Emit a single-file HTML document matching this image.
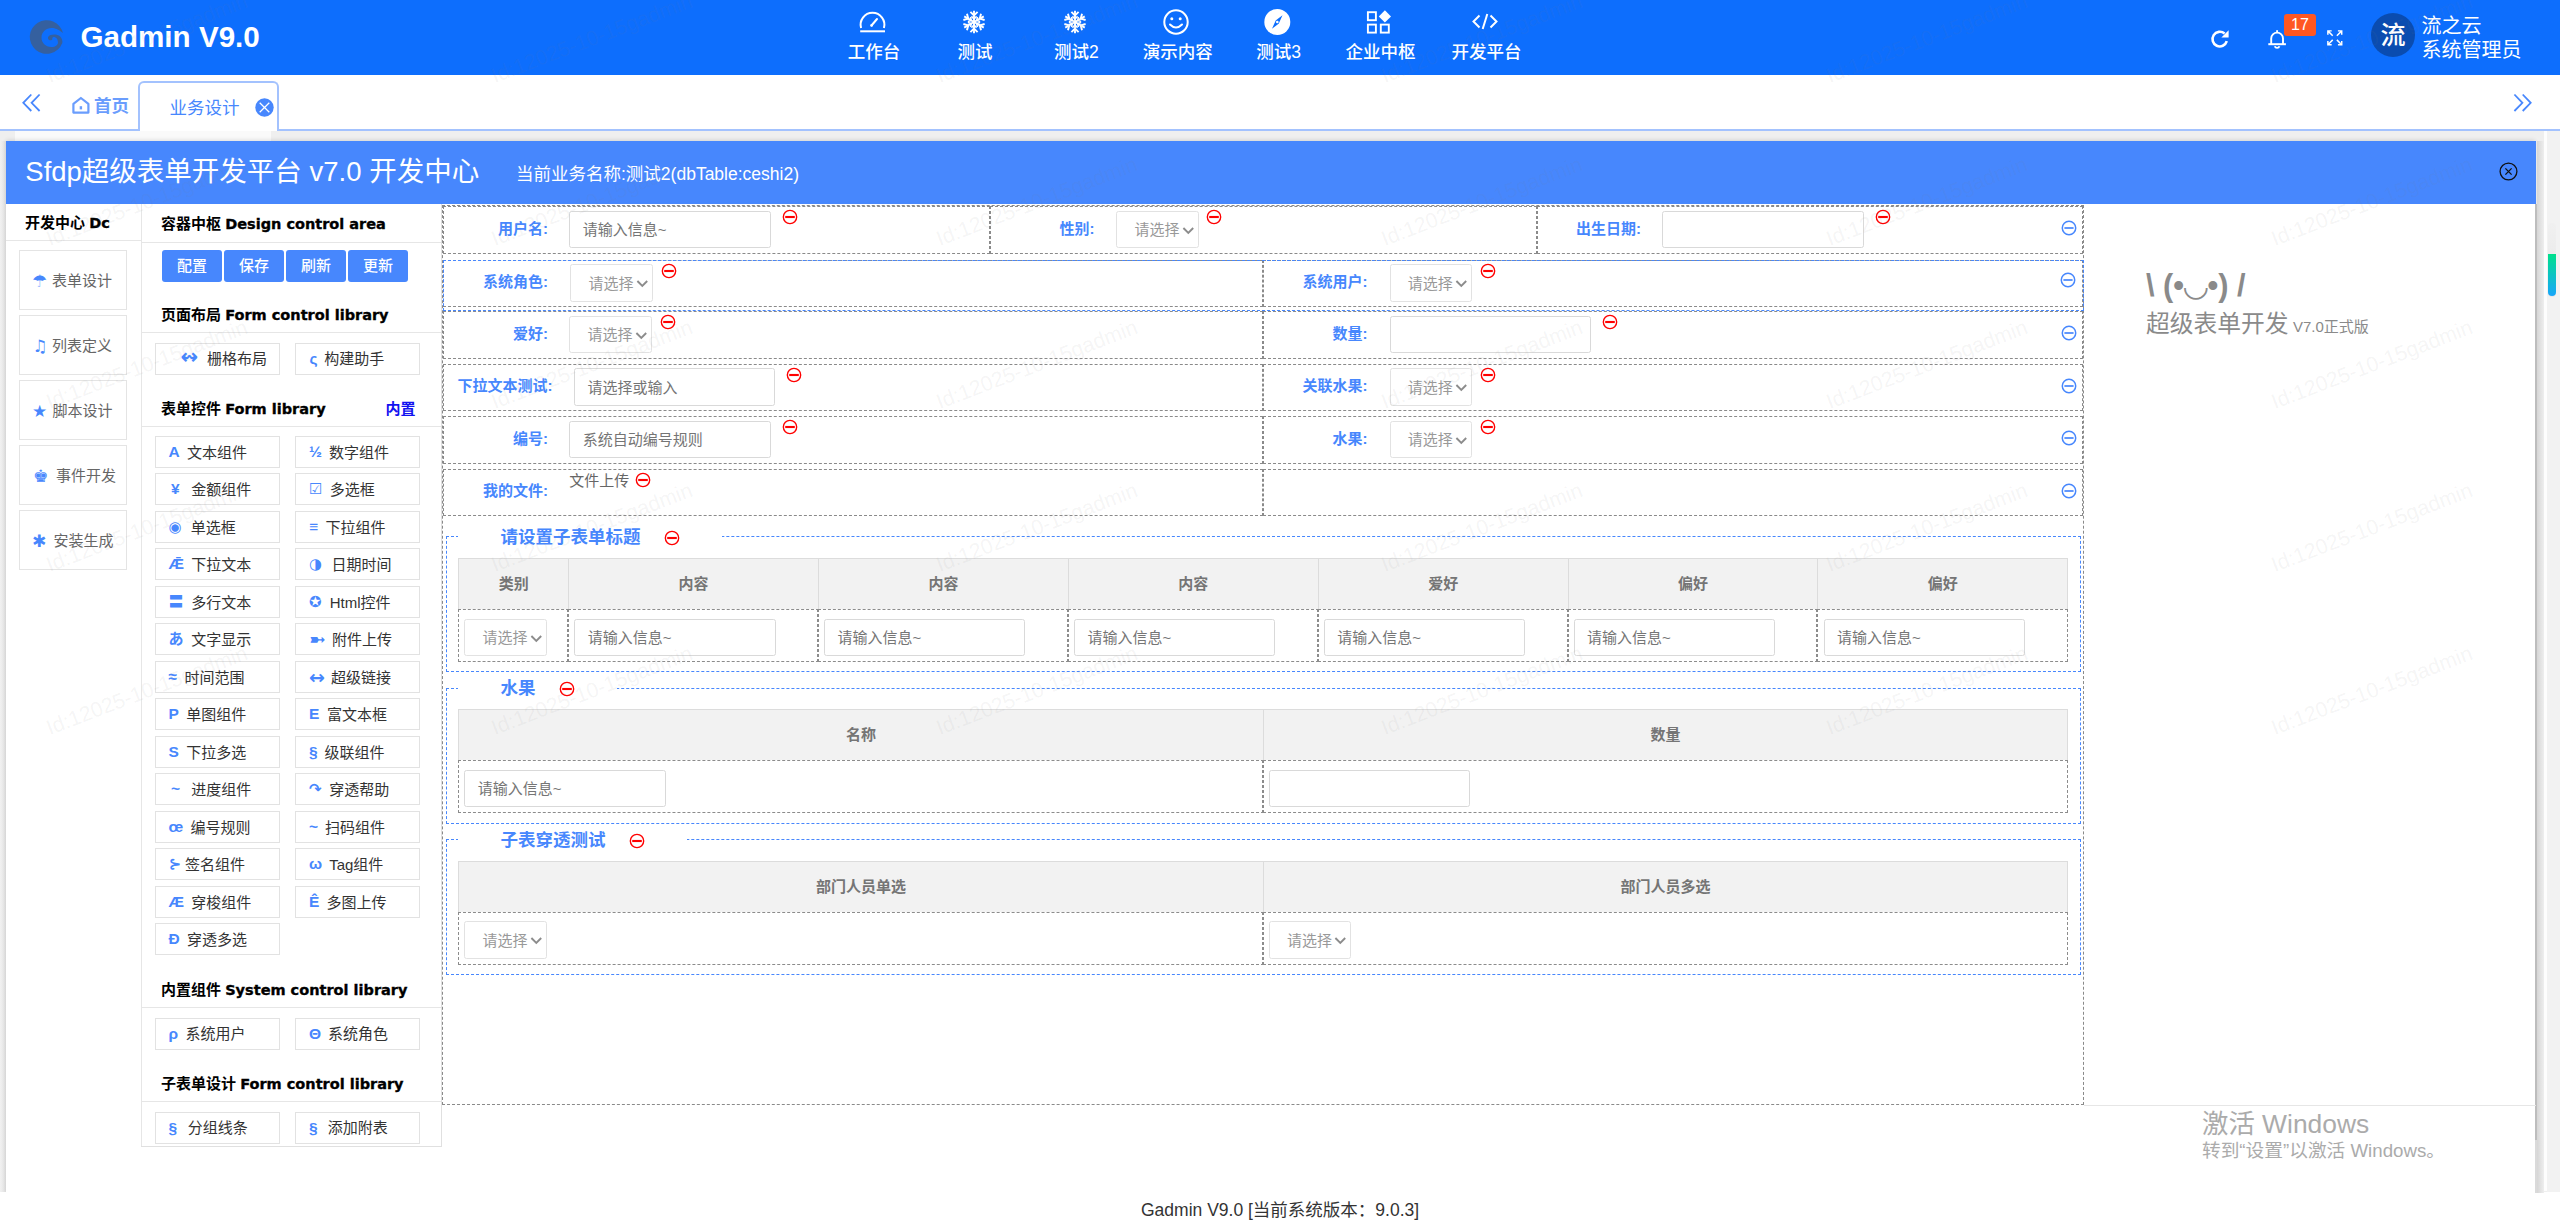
<!DOCTYPE html><html lang="zh"><head><meta charset="utf-8"><title>Gadmin V9.0</title><style>
*{box-sizing:border-box;margin:0;padding:0}
html,body{width:2560px;height:1229px;overflow:hidden;background:#fff}
body{font-family:"Liberation Sans","Noto Sans CJK SC",sans-serif;font-size:15px;color:#333;position:relative}
.a{position:absolute}
.t{position:absolute;white-space:nowrap;line-height:1}
.hdr{left:0;top:0;width:2560px;height:75px;background:#0d6efd}
.nav{color:#fff;font-size:17.5px;font-weight:500;transform:translateX(-50%)}
.box{position:absolute;border:1px solid #e4e4e4;background:#fff}
.it{position:absolute;border:1px solid #e2e2e2;height:32px;width:124.5px;background:#fff;white-space:nowrap;line-height:30px;font-size:15px;color:#333}
.it i{font-style:normal;color:#4787fd;font-weight:bold;position:absolute;top:0;font-family:"DejaVu Sans","Noto Sans CJK SC",sans-serif;font-size:14px}
.it span{position:absolute;top:0.8px}
.h5{position:absolute;left:161px;font-weight:bold;font-size:15px;color:#000;white-space:nowrap;line-height:1}
.h5 b{font-family:"DejaVu Sans",sans-serif;font-size:14.5px;font-weight:bold;-webkit-text-stroke:0.35px #000}
.hl{position:absolute;left:141px;width:300px;height:1px;background:#e6e6e6}
.btn{position:absolute;top:250px;height:32px;width:60px;border-radius:3px;background:#4787fd;color:#fff;font-size:15px;font-weight:500;line-height:32px;text-align:center}
.row{position:absolute;left:443px;width:1640px;height:48px}
.cell{position:absolute;top:0;height:48px;border:1px dashed #8a8a8a}
.lbl{position:absolute;font-weight:bold;color:#4787fd;font-size:15px;white-space:nowrap;line-height:1;text-align:right}
.inp{position:absolute;width:201px;height:36.5px;border:1px solid #d9d9d9;border-radius:2.5px;background:#fff;font-size:15px;color:#757575;line-height:36px;padding-left:12.4px;white-space:nowrap}
.sel{position:absolute;width:82.5px;height:36.5px;border:1px solid #e2e2e2;border-radius:2.5px;background:#fff;font-size:15px;color:#999;line-height:36px;padding-left:17.2px;white-space:nowrap}
.sel svg{position:absolute;left:64.5px;top:12.8px}
.ico{position:absolute;width:16px;height:16px}
.fs{position:absolute;left:446.3px;width:1634.7px;height:136px;border:1px dashed #4787fd}
.lg{position:absolute;background:#fff;height:30px;top:-15px}
.th{position:absolute;background:#f2f2f2;border:1px solid #dcdcdc;height:51px;font-weight:bold;color:#757575;font-size:15px;text-align:center;line-height:49px}
.td{position:absolute;border:1px dashed #8c8c8c;height:53px;background:#fff}
.wm{position:absolute;white-space:nowrap;font-size:21.2px;color:rgba(125,125,125,0.08);transform:rotate(-21deg);transform-origin:left bottom;line-height:1;font-family:"Liberation Sans",sans-serif;pointer-events:none}
</style></head><body>
<div class="a hdr"></div>
<svg class="a" style="left:28px;top:19px" width="38" height="38" viewBox="0 0 38 38">
<path fill="#35609f" d="M35 14.3 A16.8 16.8 0 1 0 34.3 24 L29.8 22.3 C30.8 25.5 27.5 28.3 23.3 28.1 C17.5 27.8 13.5 23.8 13.5 18.5 C13.5 13 18 8.9 23.5 8.9 C28.5 8.9 32.5 11.5 35 14.3 Z M34.3 24 C34.8 20.5 33 16.8 28.7 15.8 C25.5 15.1 21.5 15.6 20.3 17.8 C19.5 19.3 20.3 21 21.8 21.3 C23.3 21.6 24.6 20.8 24.3 19.8 C24 18.6 25.5 17.7 27 18.2 C28.8 18.8 29.7 20.5 29.8 22.3 Z"/>
</svg>
<div class="t" style="left:80.5px;top:22.3px;font-size:29.6px;font-weight:bold;color:#fff">Gadmin V9.0</div>
<div class="t nav" style="left:874px;top:44.3px">工作台</div>
<div class="t nav" style="left:975px;top:44.3px">测试</div>
<div class="t nav" style="left:1076.3px;top:44.3px">测试2</div>
<div class="t nav" style="left:1177.7px;top:44.3px">演示内容</div>
<div class="t nav" style="left:1278.7px;top:44.3px">测试3</div>
<div class="t nav" style="left:1380.6px;top:44.3px">企业中枢</div>
<div class="t nav" style="left:1486.6px;top:44.3px">开发平台</div>
<svg class="a" style="left:858px;top:10px" width="29" height="24" viewBox="0 0 29 24" fill="none" stroke="#fff" stroke-width="2">
<path d="M3.07 18 A11.9 11.9 0 1 1 25.93 18"/><path d="M2.2 21.3h24.8"/><path d="M13.5 15.5 L19 9" stroke-linecap="round"/><circle cx="13.6" cy="15.4" r="1.3" fill="#fff" stroke="none"/></svg>
<svg class="a" style="left:962px;top:9.5px" width="24" height="24" viewBox="-12 -12 24 24" fill="none" stroke="#fff" stroke-width="1.9" stroke-linecap="butt"><g transform="rotate(0)"><path d="M0 0V-11.3"/><path d="M-3.6 -10.2L0 -6.6L3.6 -10.2"/><path d="M-2.6 -5.6L0 -3L2.6 -5.6" stroke-width="1.5"/></g><g transform="rotate(60)"><path d="M0 0V-11.3"/><path d="M-3.6 -10.2L0 -6.6L3.6 -10.2"/><path d="M-2.6 -5.6L0 -3L2.6 -5.6" stroke-width="1.5"/></g><g transform="rotate(120)"><path d="M0 0V-11.3"/><path d="M-3.6 -10.2L0 -6.6L3.6 -10.2"/><path d="M-2.6 -5.6L0 -3L2.6 -5.6" stroke-width="1.5"/></g><g transform="rotate(180)"><path d="M0 0V-11.3"/><path d="M-3.6 -10.2L0 -6.6L3.6 -10.2"/><path d="M-2.6 -5.6L0 -3L2.6 -5.6" stroke-width="1.5"/></g><g transform="rotate(240)"><path d="M0 0V-11.3"/><path d="M-3.6 -10.2L0 -6.6L3.6 -10.2"/><path d="M-2.6 -5.6L0 -3L2.6 -5.6" stroke-width="1.5"/></g><g transform="rotate(300)"><path d="M0 0V-11.3"/><path d="M-3.6 -10.2L0 -6.6L3.6 -10.2"/><path d="M-2.6 -5.6L0 -3L2.6 -5.6" stroke-width="1.5"/></g></svg>
<svg class="a" style="left:1063px;top:9.5px" width="24" height="24" viewBox="-12 -12 24 24" fill="none" stroke="#fff" stroke-width="1.9" stroke-linecap="butt"><g transform="rotate(0)"><path d="M0 0V-11.3"/><path d="M-3.6 -10.2L0 -6.6L3.6 -10.2"/><path d="M-2.6 -5.6L0 -3L2.6 -5.6" stroke-width="1.5"/></g><g transform="rotate(60)"><path d="M0 0V-11.3"/><path d="M-3.6 -10.2L0 -6.6L3.6 -10.2"/><path d="M-2.6 -5.6L0 -3L2.6 -5.6" stroke-width="1.5"/></g><g transform="rotate(120)"><path d="M0 0V-11.3"/><path d="M-3.6 -10.2L0 -6.6L3.6 -10.2"/><path d="M-2.6 -5.6L0 -3L2.6 -5.6" stroke-width="1.5"/></g><g transform="rotate(180)"><path d="M0 0V-11.3"/><path d="M-3.6 -10.2L0 -6.6L3.6 -10.2"/><path d="M-2.6 -5.6L0 -3L2.6 -5.6" stroke-width="1.5"/></g><g transform="rotate(240)"><path d="M0 0V-11.3"/><path d="M-3.6 -10.2L0 -6.6L3.6 -10.2"/><path d="M-2.6 -5.6L0 -3L2.6 -5.6" stroke-width="1.5"/></g><g transform="rotate(300)"><path d="M0 0V-11.3"/><path d="M-3.6 -10.2L0 -6.6L3.6 -10.2"/><path d="M-2.6 -5.6L0 -3L2.6 -5.6" stroke-width="1.5"/></g></svg>
<svg class="a" style="left:1162px;top:7.5px" width="28" height="28" viewBox="0 0 28 28" fill="none" stroke="#fff" stroke-width="2">
<circle cx="14" cy="14" r="11.7"/><circle cx="9.8" cy="10.8" r="1.5" fill="#fff" stroke="none"/><circle cx="18.2" cy="10.8" r="1.5" fill="#fff" stroke="none"/><path d="M8 16.5 Q14 22.5 20 16.5" stroke-linecap="round"/></svg>
<svg class="a" style="left:1263px;top:7.5px" width="28" height="28" viewBox="0 0 28 28">
<circle cx="14.3" cy="14" r="13" fill="#fff"/><path d="M19.5 7.2 L15.8 15.6 L12.6 12.4 Z M9 20.8 L12.7 12.4 L15.9 15.6 Z" fill="#0d6efd"/><circle cx="14.3" cy="14" r="1.3" fill="#fff"/></svg>
<svg class="a" style="left:1366px;top:9.5px" width="26" height="25" viewBox="0 0 26 25" fill="none" stroke="#fff" stroke-width="1.9">
<rect x="1.9" y="2.2" width="8" height="8"/><rect x="1.9" y="14.6" width="8" height="8"/><rect x="14.8" y="14.6" width="8" height="8"/><path d="M18.9 0.3 L25 6.4 L18.9 12.5 L12.8 6.4 Z" fill="#fff" stroke="none"/></svg>
<svg class="a" style="left:1471px;top:12px" width="28" height="19" viewBox="0 0 28 19" fill="none" stroke="#fff" stroke-width="2" stroke-linecap="butt">
<path d="M8.5 3.5 L2.5 9.5 L8.5 15.5"/><path d="M19.5 3.5 L25.5 9.5 L19.5 15.5"/><path d="M16.3 2 L11.7 17"/></svg>
<svg class="a" style="left:2209px;top:27.5px" width="22" height="22" viewBox="0 0 22 22" fill="none" stroke="#fff" stroke-width="2.6">
<path d="M17.8 13.2 A7.3 7.3 0 1 1 15.6 5.6"/><path d="M19.6 2.2 V9.4 H12.4 Z" fill="#fff" stroke="none"/></svg>
<svg class="a" style="left:2266px;top:28px" width="22" height="22" viewBox="0 0 22 22" fill="none" stroke="#fff" stroke-width="1.9">
<path d="M5.2 16 V10.5 A5.9 5.9 0 0 1 17 10.5 V16"/><path d="M2.3 16.2 H19.9" stroke-width="2"/><path d="M8.8 18.2 A2.4 2.4 0 0 0 13.4 18.2" /><path d="M11.1 2.2V4.4"/></svg>
<div class="a" style="left:2284px;top:14px;width:32px;height:22px;background:#ff5722;border-radius:3px;color:#fff;font-size:16px;line-height:22px;text-align:center">17</div>
<svg class="a" style="left:2327.2px;top:30px" width="15.6" height="15.6" viewBox="0 0 18 18" fill="none" stroke="#fff" stroke-width="1.7">
<path d="M1 5.4V1H5.4M1.3 1.3L6.6 6.6"/><path d="M12.6 1H17V5.4M16.7 1.3L11.4 6.6"/><path d="M1 12.6V17H5.4M1.3 16.7L6.6 11.4"/><path d="M12.6 17H17V12.6M16.7 16.7L11.4 11.4"/></svg>
<div class="a" style="left:2371px;top:12.5px;width:44px;height:44px;border-radius:50%;background:#0a4cb0"></div>
<div class="t" style="left:2380.5px;top:22.5px;font-size:25px;font-weight:500;color:#fff">流</div>
<div class="t" style="left:2421.5px;top:15.6px;font-size:20px;color:#fff">流之云</div>
<div class="t" style="left:2421.5px;top:40px;font-size:20px;color:#fff">系统管理员</div>
<div class="a" style="left:0;top:75px;width:2560px;height:55px;background:#fff"></div>
<div class="a" style="left:0;top:130px;width:2560px;height:1063px;background:#efefef"></div><div class="a" style="left:0;top:141px;width:6px;height:1052px;background:linear-gradient(to right,#f1f1f1,#e2e2e2)"></div>
<div class="a" style="left:15px;top:131px;width:256px;height:10px;background:#fafafa"></div>
<div class="a" style="left:0;top:129px;width:2560px;height:2px;background:#a3c2fe"></div>
<svg class="a" style="left:21px;top:92.5px" width="21" height="20" viewBox="0 0 21 20" fill="none" stroke="#4787fd" stroke-width="1.8"><path d="M10.3 1.5L2.3 9.8L10.3 18"/><path d="M18.6 1.5L10.6 9.8L18.6 18"/></svg>
<svg class="a" style="left:2512px;top:92.5px" width="21" height="20" viewBox="0 0 21 20" fill="none" stroke="#4787fd" stroke-width="1.8"><path d="M2.4 1.5L10.4 9.8L2.4 18"/><path d="M10.7 1.5L18.7 9.8L10.7 18"/></svg>
<svg class="a" style="left:71px;top:96px" width="20" height="19" viewBox="0 0 20 19" fill="none" stroke="#6a9dfd" stroke-width="2.2" stroke-linejoin="round"><path d="M2.4 7.8 L9.9 2 L17.4 7.8 V16.6 H2.4 Z"/><path d="M9.9 10.2V13.4" stroke-width="2.4"/></svg>
<div class="t" style="left:94px;top:98.2px;font-size:17.5px;font-weight:bold;color:#6a9dfd">首页</div>
<div class="a" style="left:138px;top:81px;width:141px;height:50px;border:2px solid #a3c2fe;border-bottom:none;border-radius:6px 6px 0 0;background:#fff"></div>
<div class="t" style="left:169.5px;top:99.7px;font-size:17.5px;color:#4787fd">业务设计</div>
<svg class="a" style="left:254.5px;top:98px" width="19" height="19" viewBox="0 0 19 19"><circle cx="9.5" cy="9.5" r="9.2" fill="#4787fd"/><path d="M4.7 4.7L14.3 14.3M14.3 4.7L4.7 14.3" stroke="#fff" stroke-width="1.25"/></svg>
<div class="a" style="left:6px;top:141px;width:2529px;height:1053px;background:#fff;box-shadow:0 -1px 4px rgba(0,0,0,.12)"></div>
<div class="a" style="left:6px;top:141px;width:2530px;height:63px;background:#4787fd"></div>
<div class="t" style="left:25.3px;top:158px;font-size:27.5px;color:#fff">Sfdp超级表单开发平台 v7.0 开发中心</div>
<div class="t" style="left:516px;top:166px;font-size:17.5px;color:#fff">当前业务名称:测试2(dbTable:ceshi2)</div>
<svg class="a" style="left:2498px;top:161px" width="21" height="21" viewBox="0 0 21 21" fill="none" stroke="#111" stroke-width="1.3"><circle cx="10.5" cy="10.5" r="8.4"/><path d="M7.4 7.4L13.6 13.6M13.6 7.4L7.4 13.6"/></svg>
<div class="a" style="left:0;top:1192px;width:2560px;height:37px;background:#fff"></div>
<div class="t" style="left:1141px;top:1202px;font-size:17.5px;color:#333">Gadmin V9.0 [当前系统版本：9.0.3]</div>
<div class="a" style="left:2535px;top:204px;width:2px;height:936px;background:#bdbdbd"></div>
<div class="a" style="left:2535px;top:1140px;width:2px;height:53px;background:#dadada"></div>
<div class="a" style="left:2537px;top:141px;width:7.2px;height:1052px;background:linear-gradient(to right,#d6d6d6,#eeeeee)"></div>
<div class="a" style="left:2544.2px;top:131px;width:2.8px;height:1060px;background:#fdfdfd"></div>
<div class="a" style="left:2547px;top:131px;width:13px;height:1060.5px;background:#f2f2f2"></div>
<div class="a" style="left:2547.8px;top:223px;width:8.6px;height:74px;border-radius:5px;background:linear-gradient(#f0f0f0,#e6e6e6)"></div>
<div class="a" style="left:2547.8px;top:253.8px;width:8.6px;height:42.7px;border-radius:0 0 5px 5px;background:linear-gradient(#00e08c,#18a6fa)"></div>
<div class="a" style="left:140.5px;top:204px;width:1px;height:942px;background:#e6e6e6"></div>
<div class="t" style="left:25px;top:215px;font-size:15px;font-weight:bold;color:#000">开发中心 <b style="font-family:'DejaVu Sans',sans-serif;font-size:14.5px;-webkit-text-stroke:0.35px #000">Dc</b></div>
<div class="a" style="left:6px;top:240px;width:135px;height:1px;background:#e6e6e6"></div>
<div class="box" style="left:19px;top:250px;width:108px;height:59.5px"></div>
<div class="t" style="left:32px;top:272.6px;font-size:17px;color:#4787fd;font-family:'DejaVu Sans','Noto Sans CJK SC',sans-serif">☂</div>
<div class="t" style="left:52px;top:273.3px;font-size:15px;color:#666">表单设计</div>
<div class="box" style="left:19px;top:315px;width:108px;height:59.5px"></div>
<div class="t" style="left:32.5px;top:337.6px;font-size:17px;color:#4787fd;font-family:'DejaVu Sans','Noto Sans CJK SC',sans-serif">♫</div>
<div class="t" style="left:52px;top:338.3px;font-size:15px;color:#666">列表定义</div>
<div class="box" style="left:19px;top:380px;width:108px;height:59.5px"></div>
<div class="t" style="left:32px;top:402.6px;font-size:17px;color:#4787fd;font-family:'DejaVu Sans','Noto Sans CJK SC',sans-serif">★</div>
<div class="t" style="left:52.5px;top:403.3px;font-size:15px;color:#666">脚本设计</div>
<div class="box" style="left:19px;top:445px;width:108px;height:59.5px"></div>
<div class="t" style="left:33px;top:467.6px;font-size:17px;color:#4787fd;font-family:'DejaVu Sans','Noto Sans CJK SC',sans-serif">♚</div>
<div class="t" style="left:56px;top:468.3px;font-size:15px;color:#666">事件开发</div>
<div class="box" style="left:19px;top:510px;width:108px;height:59.5px"></div>
<div class="t" style="left:32px;top:532.6px;font-size:17px;color:#4787fd;font-family:'DejaVu Sans','Noto Sans CJK SC',sans-serif">✱</div>
<div class="t" style="left:53.5px;top:533.3px;font-size:15px;color:#666">安装生成</div>
<div class="a" style="left:441px;top:204px;width:1px;height:942px;background:#e0e0e0"></div>
<div class="a" style="left:141px;top:1145.5px;width:301px;height:1px;background:#e0e0e0"></div>
<div class="h5" style="top:216px">容器中枢 <b>Design control area</b></div>
<div class="hl" style="top:242px"></div>
<div class="btn" style="left:162px">配置</div>
<div class="btn" style="left:224px">保存</div>
<div class="btn" style="left:286px">刷新</div>
<div class="btn" style="left:348px">更新</div>
<div class="h5" style="top:307px">页面布局 <b>Form control library</b></div>
<div class="hl" style="top:332px"></div>
<div class="h5" style="top:401px">表单控件 <b>Form library</b></div>
<div class="t" style="left:385.5px;top:401px;font-size:15px;font-weight:bold;color:#1212f0">内置</div>
<div class="hl" style="top:426px"></div>
<div class="h5" style="top:982px">内置组件 <b>System control library</b></div>
<div class="hl" style="top:1007px"></div>
<div class="h5" style="top:1076px">子表单设计 <b>Form control library</b></div>
<div class="hl" style="top:1101px"></div>
<div class="it" style="left:155px;top:342.5px"><i style="left:24.6px;top:-1.5px;font-size:21px;font-family:'DejaVu Sans','Noto Sans CJK SC',sans-serif">↭</i><span style="left:51.1px">栅格布局</span></div>
<div class="it" style="left:295px;top:342.5px"><i style="left:13.6px;top:0px;font-size:15.5px;font-family:'Liberation Sans','DejaVu Sans',sans-serif">ς</i><span style="left:28.2px">构建助手</span></div>
<div class="it" style="left:155px;top:436.0px"><i style="left:12.6px;top:0px;font-size:15.5px;font-family:'Liberation Sans','DejaVu Sans',sans-serif">A</i><span style="left:30.900000000000002px">文本组件</span></div>
<div class="it" style="left:295px;top:436.0px"><i style="left:13.1px;top:0px;font-size:15.5px;font-family:'Liberation Sans','DejaVu Sans',sans-serif">½</i><span style="left:32.900000000000006px">数字组件</span></div>
<div class="it" style="left:155px;top:473.48px"><i style="left:15.1px;top:0px;font-size:15.5px;font-family:'Liberation Sans','DejaVu Sans',sans-serif">¥</i><span style="left:35.300000000000004px">金额组件</span></div>
<div class="it" style="left:295px;top:473.48px"><i style="left:13.1px;top:0px;font-size:15px;font-family:'DejaVu Sans','Noto Sans CJK SC',sans-serif">☑</i><span style="left:33.7px">多选框</span></div>
<div class="it" style="left:155px;top:510.96px"><i style="left:12.6px;top:0px;font-size:15px;font-family:'DejaVu Sans','Noto Sans CJK SC',sans-serif">◉</i><span style="left:34.800000000000004px">单选框</span></div>
<div class="it" style="left:295px;top:510.96px"><i style="left:13.1px;top:0px;font-size:15.5px;font-family:'Liberation Sans','DejaVu Sans',sans-serif">≡</i><span style="left:29.599999999999998px">下拉组件</span></div>
<div class="it" style="left:155px;top:548.44px"><i style="left:12.6px;top:0px;font-size:15.5px;font-family:'Liberation Sans','DejaVu Sans',sans-serif">Ǣ</i><span style="left:35.300000000000004px">下拉文本</span></div>
<div class="it" style="left:295px;top:548.44px"><i style="left:13.1px;top:0px;font-size:15px;font-family:'DejaVu Sans','Noto Sans CJK SC',sans-serif">◑</i><span style="left:35.5px">日期时间</span></div>
<div class="it" style="left:155px;top:585.92px"><i style="left:12.6px;top:0px;font-size:15px;font-family:'DejaVu Sans','Noto Sans CJK SC',sans-serif">〓</i><span style="left:35.300000000000004px">多行文本</span></div>
<div class="it" style="left:295px;top:585.92px"><i style="left:13.1px;top:0px;font-size:15px;font-family:'DejaVu Sans','Noto Sans CJK SC',sans-serif">✪</i><span style="left:33.7px">Html控件</span></div>
<div class="it" style="left:155px;top:623.4px"><i style="left:12.6px;top:0px;font-size:15px;font-family:'DejaVu Sans','Noto Sans CJK SC',sans-serif">あ</i><span style="left:35.300000000000004px">文字显示</span></div>
<div class="it" style="left:295px;top:623.4px"><i style="left:13.1px;top:0px;font-size:20px;font-family:'DejaVu Sans','Noto Sans CJK SC',sans-serif">➼</i><span style="left:35.900000000000006px">附件上传</span></div>
<div class="it" style="left:155px;top:660.88px"><i style="left:12.6px;top:0px;font-size:15.5px;font-family:'Liberation Sans','DejaVu Sans',sans-serif">≈</i><span style="left:28.599999999999998px">时间范围</span></div>
<div class="it" style="left:295px;top:660.88px"><i style="left:13.1px;top:0px;font-size:19px;font-family:'DejaVu Sans','Noto Sans CJK SC',sans-serif">↔</i><span style="left:35.0px">超级链接</span></div>
<div class="it" style="left:155px;top:698.3599999999999px"><i style="left:12.6px;top:0px;font-size:15.5px;font-family:'Liberation Sans','DejaVu Sans',sans-serif">P</i><span style="left:30.3px">单图组件</span></div>
<div class="it" style="left:295px;top:698.3599999999999px"><i style="left:13.1px;top:0px;font-size:15.5px;font-family:'Liberation Sans','DejaVu Sans',sans-serif">E</i><span style="left:30.900000000000002px">富文本框</span></div>
<div class="it" style="left:155px;top:735.8399999999999px"><i style="left:12.6px;top:0px;font-size:15.5px;font-family:'Liberation Sans','DejaVu Sans',sans-serif">S</i><span style="left:30.3px">下拉多选</span></div>
<div class="it" style="left:295px;top:735.8399999999999px"><i style="left:13.1px;top:0px;font-size:15.5px;font-family:'Liberation Sans','DejaVu Sans',sans-serif">§</i><span style="left:28.4px">级联组件</span></div>
<div class="it" style="left:155px;top:773.3199999999999px"><i style="left:15.1px;top:0px;font-size:15.5px;font-family:'Liberation Sans','DejaVu Sans',sans-serif">~</i><span style="left:35.300000000000004px">进度组件</span></div>
<div class="it" style="left:295px;top:773.3199999999999px"><i style="left:13.1px;top:0px;font-size:15px;font-family:'DejaVu Sans','Noto Sans CJK SC',sans-serif">↷</i><span style="left:33.2px">穿透帮助</span></div>
<div class="it" style="left:155px;top:810.8px"><i style="left:12.6px;top:0px;font-size:15.5px;font-family:'Liberation Sans','DejaVu Sans',sans-serif">œ</i><span style="left:34.5px">编号规则</span></div>
<div class="it" style="left:295px;top:810.8px"><i style="left:13.1px;top:0px;font-size:15.5px;font-family:'Liberation Sans','DejaVu Sans',sans-serif">~</i><span style="left:29.099999999999998px">扫码组件</span></div>
<div class="it" style="left:155px;top:848.28px"><i style="left:12.6px;top:0px;font-size:15px;font-family:'DejaVu Sans','Noto Sans CJK SC',sans-serif">⊱</i><span style="left:29.099999999999998px">签名组件</span></div>
<div class="it" style="left:295px;top:848.28px"><i style="left:13.1px;top:0px;font-size:15.5px;font-family:'Liberation Sans','DejaVu Sans',sans-serif">ω</i><span style="left:33.2px">Tag组件</span></div>
<div class="it" style="left:155px;top:885.76px"><i style="left:12.6px;top:0px;font-size:15.5px;font-family:'Liberation Sans','DejaVu Sans',sans-serif">Æ</i><span style="left:35.300000000000004px">穿梭组件</span></div>
<div class="it" style="left:295px;top:885.76px"><i style="left:13.1px;top:0px;font-size:15.5px;font-family:'Liberation Sans','DejaVu Sans',sans-serif">Ê</i><span style="left:30.5px">多图上传</span></div>
<div class="it" style="left:155px;top:923.24px"><i style="left:12.6px;top:0px;font-size:15.5px;font-family:'Liberation Sans','DejaVu Sans',sans-serif">Ð</i><span style="left:30.900000000000002px">穿透多选</span></div>
<div class="it" style="left:155px;top:1017.5px"><i style="left:12.6px;top:0px;font-size:15.5px;font-family:'Liberation Sans','DejaVu Sans',sans-serif">ρ</i><span style="left:29.599999999999998px">系统用户</span></div>
<div class="it" style="left:295px;top:1017.5px"><i style="left:13.1px;top:0px;font-size:15.5px;font-family:'Liberation Sans','DejaVu Sans',sans-serif">Θ</i><span style="left:31.999999999999996px">系统角色</span></div>
<div class="it" style="left:155px;top:1111.5px"><i style="left:12.6px;top:0px;font-size:15.5px;font-family:'Liberation Sans','DejaVu Sans',sans-serif">§</i><span style="left:31.7px">分组线条</span></div>
<div class="it" style="left:295px;top:1111.5px"><i style="left:13.1px;top:0px;font-size:15.5px;font-family:'Liberation Sans','DejaVu Sans',sans-serif">§</i><span style="left:31.7px">添加附表</span></div>
<div class="a" style="left:442px;top:205px;width:1642px;height:900px;border:1px dashed #8a8a8a"></div>
<div class="a" style="left:2084px;top:1104.5px;width:452px;height:1px;background:#e6e6e6"></div>
<div class="a" style="left:443px;top:206px;width:547px;height:48px;border:1px dashed #8a8a8a"></div>
<div class="a" style="left:990px;top:206px;width:546.5px;height:48px;border:1px dashed #8a8a8a"></div>
<div class="a" style="left:1536.5px;top:206px;width:546.5px;height:48px;border:1px dashed #8a8a8a"></div>
<div class="a" style="left:443px;top:260px;width:820px;height:47px;border:1px dashed #8a8a8a"></div>
<div class="a" style="left:1263px;top:260px;width:820px;height:47px;border:1px dashed #8a8a8a"></div>
<div class="a" style="left:443px;top:311px;width:820px;height:48px;border:1px dashed #8a8a8a"></div>
<div class="a" style="left:1263px;top:311px;width:820px;height:48px;border:1px dashed #8a8a8a"></div>
<div class="a" style="left:443px;top:364px;width:820px;height:47px;border:1px dashed #8a8a8a"></div>
<div class="a" style="left:1263px;top:364px;width:820px;height:47px;border:1px dashed #8a8a8a"></div>
<div class="a" style="left:443px;top:416px;width:820px;height:48px;border:1px dashed #8a8a8a"></div>
<div class="a" style="left:1263px;top:416px;width:820px;height:48px;border:1px dashed #8a8a8a"></div>
<div class="a" style="left:443px;top:469px;width:820px;height:47px;border:1px dashed #8a8a8a"></div>
<div class="a" style="left:1263px;top:469px;width:820px;height:47px;border:1px dashed #8a8a8a"></div>
<div class="a" style="left:443px;top:260px;width:1640.5px;height:51px;border:1px dashed #4787fd"></div>
<div class="lbl" style="left:348px;width:200px;top:221px">用户名:</div>
<div class="inp" style="left:569.3px;top:211px;width:201.3px;height:37px;line-height:36px">请输入信息~</div>
<svg class="ico" style="left:781.6999999999999px;top:208.60000000000002px" viewBox="0 0 15 15" fill="none" stroke="#f00" stroke-width="1.3"><circle cx="7.5" cy="7.5" r="6.25"/><path d="M3 7.5H12" stroke-width="2"/></svg>
<div class="lbl" style="left:894.5px;width:200px;top:221px">性别:</div>
<div class="sel" style="left:1116.4px;top:211px;height:37px;line-height:36px">请选择<svg width="13" height="12" viewBox="0 0 13 12" fill="none" stroke="#8c8c8c" stroke-width="1.9"><path d="M1.4 3L6.3 7.9L11.2 3"/></svg></div>
<svg class="ico" style="left:1206.3999999999999px;top:208.8px" viewBox="0 0 15 15" fill="none" stroke="#f00" stroke-width="1.3"><circle cx="7.5" cy="7.5" r="6.25"/><path d="M3 7.5H12" stroke-width="2"/></svg>
<div class="lbl" style="left:1441px;width:200px;top:221px">出生日期:</div>
<div class="inp" style="left:1662.2px;top:211px;width:202.3px;height:37px;line-height:36px"></div>
<svg class="ico" style="left:1874.8px;top:208.8px" viewBox="0 0 15 15" fill="none" stroke="#f00" stroke-width="1.3"><circle cx="7.5" cy="7.5" r="6.25"/><path d="M3 7.5H12" stroke-width="2"/></svg>
<svg class="ico" style="left:2060.7px;top:220px" viewBox="0 0 15 15" fill="none" stroke="#4787fd" stroke-width="1.4"><circle cx="7.5" cy="7.5" r="6.3"/><path d="M3.2 7.5H11.8" stroke-width="1.6"/></svg>
<div class="lbl" style="left:348px;width:200px;top:274px">系统角色:</div>
<div class="sel" style="left:570.4px;top:264px;height:38px;line-height:37px">请选择<svg width="13" height="12" viewBox="0 0 13 12" fill="none" stroke="#8c8c8c" stroke-width="1.9"><path d="M1.4 3L6.3 7.9L11.2 3"/></svg></div>
<svg class="ico" style="left:660.5999999999999px;top:262.8px" viewBox="0 0 15 15" fill="none" stroke="#f00" stroke-width="1.3"><circle cx="7.5" cy="7.5" r="6.25"/><path d="M3 7.5H12" stroke-width="2"/></svg>
<div class="lbl" style="left:1167.5px;width:200px;top:274px">系统用户:</div>
<div class="sel" style="left:1389.6px;top:264px;height:38px;line-height:37px">请选择<svg width="13" height="12" viewBox="0 0 13 12" fill="none" stroke="#8c8c8c" stroke-width="1.9"><path d="M1.4 3L6.3 7.9L11.2 3"/></svg></div>
<svg class="ico" style="left:1479.5px;top:262.8px" viewBox="0 0 15 15" fill="none" stroke="#f00" stroke-width="1.3"><circle cx="7.5" cy="7.5" r="6.25"/><path d="M3 7.5H12" stroke-width="2"/></svg>
<svg class="ico" style="left:2060px;top:272px" viewBox="0 0 15 15" fill="none" stroke="#4787fd" stroke-width="1.4"><circle cx="7.5" cy="7.5" r="6.3"/><path d="M3.2 7.5H11.8" stroke-width="1.6"/></svg>
<div class="lbl" style="left:348px;width:200px;top:326px">爱好:</div>
<div class="sel" style="left:569.3px;top:316px;height:37px;line-height:36px">请选择<svg width="13" height="12" viewBox="0 0 13 12" fill="none" stroke="#8c8c8c" stroke-width="1.9"><path d="M1.4 3L6.3 7.9L11.2 3"/></svg></div>
<svg class="ico" style="left:659.8px;top:313.8px" viewBox="0 0 15 15" fill="none" stroke="#f00" stroke-width="1.3"><circle cx="7.5" cy="7.5" r="6.25"/><path d="M3 7.5H12" stroke-width="2"/></svg>
<div class="lbl" style="left:1167.5px;width:200px;top:326px">数量:</div>
<div class="inp" style="left:1389.5px;top:316px;width:201.3px;height:37px;line-height:36px"></div>
<svg class="ico" style="left:1601.5px;top:313.8px" viewBox="0 0 15 15" fill="none" stroke="#f00" stroke-width="1.3"><circle cx="7.5" cy="7.5" r="6.25"/><path d="M3 7.5H12" stroke-width="2"/></svg>
<svg class="ico" style="left:2060.7px;top:325px" viewBox="0 0 15 15" fill="none" stroke="#4787fd" stroke-width="1.4"><circle cx="7.5" cy="7.5" r="6.3"/><path d="M3.2 7.5H11.8" stroke-width="1.6"/></svg>
<div class="lbl" style="left:352.5px;width:200px;top:378px">下拉文本测试:</div>
<div class="inp" style="left:574.2px;top:368px;width:201.3px;height:38px;line-height:37px">请选择或输入</div>
<svg class="ico" style="left:786.3px;top:366.8px" viewBox="0 0 15 15" fill="none" stroke="#f00" stroke-width="1.3"><circle cx="7.5" cy="7.5" r="6.25"/><path d="M3 7.5H12" stroke-width="2"/></svg>
<div class="lbl" style="left:1167.5px;width:200px;top:378px">关联水果:</div>
<div class="sel" style="left:1389.5px;top:368px;height:38px;line-height:37px">请选择<svg width="13" height="12" viewBox="0 0 13 12" fill="none" stroke="#8c8c8c" stroke-width="1.9"><path d="M1.4 3L6.3 7.9L11.2 3"/></svg></div>
<svg class="ico" style="left:1479.7px;top:366.8px" viewBox="0 0 15 15" fill="none" stroke="#f00" stroke-width="1.3"><circle cx="7.5" cy="7.5" r="6.25"/><path d="M3 7.5H12" stroke-width="2"/></svg>
<svg class="ico" style="left:2060.7px;top:378px" viewBox="0 0 15 15" fill="none" stroke="#4787fd" stroke-width="1.4"><circle cx="7.5" cy="7.5" r="6.3"/><path d="M3.2 7.5H11.8" stroke-width="1.6"/></svg>
<div class="lbl" style="left:348px;width:200px;top:431px">编号:</div>
<div class="inp" style="left:569.3px;top:421px;width:201.3px;height:37px;line-height:36px">系统自动编号规则</div>
<svg class="ico" style="left:781.6999999999999px;top:418.8px" viewBox="0 0 15 15" fill="none" stroke="#f00" stroke-width="1.3"><circle cx="7.5" cy="7.5" r="6.25"/><path d="M3 7.5H12" stroke-width="2"/></svg>
<div class="lbl" style="left:1167.5px;width:200px;top:431px">水果:</div>
<div class="sel" style="left:1389.5px;top:421px;height:37px;line-height:36px">请选择<svg width="13" height="12" viewBox="0 0 13 12" fill="none" stroke="#8c8c8c" stroke-width="1.9"><path d="M1.4 3L6.3 7.9L11.2 3"/></svg></div>
<svg class="ico" style="left:1479.7px;top:418.8px" viewBox="0 0 15 15" fill="none" stroke="#f00" stroke-width="1.3"><circle cx="7.5" cy="7.5" r="6.25"/><path d="M3 7.5H12" stroke-width="2"/></svg>
<svg class="ico" style="left:2060.7px;top:430px" viewBox="0 0 15 15" fill="none" stroke="#4787fd" stroke-width="1.4"><circle cx="7.5" cy="7.5" r="6.3"/><path d="M3.2 7.5H11.8" stroke-width="1.6"/></svg>
<div class="lbl" style="left:348px;width:200px;top:483px">我的文件:</div>
<div class="t" style="left:569.3px;top:473px;font-size:15px;color:#666">文件上传</div>
<svg class="ico" style="left:635.3px;top:471.8px" viewBox="0 0 15 15" fill="none" stroke="#f00" stroke-width="1.3"><circle cx="7.5" cy="7.5" r="6.25"/><path d="M3 7.5H12" stroke-width="2"/></svg>
<svg class="ico" style="left:2060.7px;top:483px" viewBox="0 0 15 15" fill="none" stroke="#4787fd" stroke-width="1.4"><circle cx="7.5" cy="7.5" r="6.3"/><path d="M3.2 7.5H11.8" stroke-width="1.6"/></svg>
<div class="fs" style="top:536px;height:136px"></div>
<div class="a" style="left:458px;top:524px;width:264px;height:26px;background:#fff"></div>
<div class="t" style="left:500.5px;top:529px;font-size:17.5px;font-weight:bold;color:#4787fd">请设置子表单标题</div>
<svg class="ico" style="left:663.6999999999999px;top:529.6999999999999px" viewBox="0 0 15 15" fill="none" stroke="#f00" stroke-width="1.3"><circle cx="7.5" cy="7.5" r="6.25"/><path d="M3 7.5H12" stroke-width="2"/></svg>
<div class="th" style="left:458.2px;top:558px;width:111px;height:52px;line-height:50px">类别</div>
<div class="th" style="left:568.2px;top:558px;width:250.85px;height:52px;line-height:50px">内容</div>
<div class="th" style="left:818.0500000000001px;top:558px;width:250.85px;height:52px;line-height:50px">内容</div>
<div class="th" style="left:1067.9px;top:558px;width:250.85px;height:52px;line-height:50px">内容</div>
<div class="th" style="left:1317.75px;top:558px;width:250.85px;height:52px;line-height:50px">爱好</div>
<div class="th" style="left:1567.6px;top:558px;width:250.85px;height:52px;line-height:50px">偏好</div>
<div class="th" style="left:1817.45px;top:558px;width:250.85px;height:52px;line-height:50px">偏好</div>
<div class="td" style="left:458.2px;top:609px;width:111px;height:53px"></div>
<div class="sel" style="left:464.3px;top:619px;height:37px;line-height:36px">请选择<svg width="13" height="12" viewBox="0 0 13 12" fill="none" stroke="#8c8c8c" stroke-width="1.9"><path d="M1.4 3L6.3 7.9L11.2 3"/></svg></div>
<div class="td" style="left:568.2px;top:609px;width:250.85px;height:53px"></div>
<div class="a" style="left:567.2px;top:609px;width:1px;height:53px;border-left:1px dashed #8c8c8c"></div>
<div class="inp" style="left:574.3000000000001px;top:619px;width:201.3px;height:37px;line-height:36px">请输入信息~</div>
<div class="td" style="left:818.0500000000001px;top:609px;width:250.85px;height:53px"></div>
<div class="a" style="left:817.0500000000001px;top:609px;width:1px;height:53px;border-left:1px dashed #8c8c8c"></div>
<div class="inp" style="left:824.1500000000001px;top:619px;width:201.3px;height:37px;line-height:36px">请输入信息~</div>
<div class="td" style="left:1067.9px;top:609px;width:250.85px;height:53px"></div>
<div class="a" style="left:1066.9px;top:609px;width:1px;height:53px;border-left:1px dashed #8c8c8c"></div>
<div class="inp" style="left:1074.0px;top:619px;width:201.3px;height:37px;line-height:36px">请输入信息~</div>
<div class="td" style="left:1317.75px;top:609px;width:250.85px;height:53px"></div>
<div class="a" style="left:1316.75px;top:609px;width:1px;height:53px;border-left:1px dashed #8c8c8c"></div>
<div class="inp" style="left:1323.85px;top:619px;width:201.3px;height:37px;line-height:36px">请输入信息~</div>
<div class="td" style="left:1567.6px;top:609px;width:250.85px;height:53px"></div>
<div class="a" style="left:1566.6px;top:609px;width:1px;height:53px;border-left:1px dashed #8c8c8c"></div>
<div class="inp" style="left:1573.6999999999998px;top:619px;width:201.3px;height:37px;line-height:36px">请输入信息~</div>
<div class="td" style="left:1817.45px;top:609px;width:250.85px;height:53px"></div>
<div class="a" style="left:1816.45px;top:609px;width:1px;height:53px;border-left:1px dashed #8c8c8c"></div>
<div class="inp" style="left:1823.55px;top:619px;width:201.3px;height:37px;line-height:36px">请输入信息~</div>
<div class="fs" style="top:688px;height:136px"></div>
<div class="a" style="left:458px;top:676px;width:158.5px;height:26px;background:#fff"></div>
<div class="t" style="left:500.5px;top:680px;font-size:17.5px;font-weight:bold;color:#4787fd">水果</div>
<svg class="ico" style="left:558.9px;top:680.6999999999999px" viewBox="0 0 15 15" fill="none" stroke="#f00" stroke-width="1.3"><circle cx="7.5" cy="7.5" r="6.25"/><path d="M3 7.5H12" stroke-width="2"/></svg>
<div class="th" style="left:458.2px;top:709px;width:805.6px;height:52px;line-height:50px">名称</div>
<div class="th" style="left:1262.8px;top:709px;width:805.6px;height:52px;line-height:50px">数量</div>
<div class="td" style="left:458.2px;top:760px;width:805.6px;height:53px"></div>
<div class="inp" style="left:464.3px;top:770px;width:201.3px;height:37px;line-height:36px">请输入信息~</div>
<div class="td" style="left:1262.8px;top:760px;width:805.6px;height:53px"></div>
<div class="a" style="left:1261.8px;top:760px;width:1px;height:53px;border-left:1px dashed #8c8c8c"></div>
<div class="inp" style="left:1268.8999999999999px;top:770px;width:201.3px;height:37px;line-height:36px"></div>
<div class="fs" style="top:839px;height:136px"></div>
<div class="a" style="left:458px;top:827px;width:229px;height:26px;background:#fff"></div>
<div class="t" style="left:500.5px;top:832px;font-size:17.5px;font-weight:bold;color:#4787fd">子表穿透测试</div>
<svg class="ico" style="left:628.8px;top:832.9px" viewBox="0 0 15 15" fill="none" stroke="#f00" stroke-width="1.3"><circle cx="7.5" cy="7.5" r="6.25"/><path d="M3 7.5H12" stroke-width="2"/></svg>
<div class="th" style="left:458.2px;top:861px;width:805.6px;height:52px;line-height:50px">部门人员单选</div>
<div class="th" style="left:1262.8px;top:861px;width:805.6px;height:52px;line-height:50px">部门人员多选</div>
<div class="td" style="left:458.2px;top:912px;width:805.6px;height:53px"></div>
<div class="sel" style="left:464.3px;top:921px;height:38px;line-height:37px">请选择<svg width="13" height="12" viewBox="0 0 13 12" fill="none" stroke="#8c8c8c" stroke-width="1.9"><path d="M1.4 3L6.3 7.9L11.2 3"/></svg></div>
<div class="td" style="left:1262.8px;top:912px;width:805.6px;height:53px"></div>
<div class="a" style="left:1261.8px;top:912px;width:1px;height:53px;border-left:1px dashed #8c8c8c"></div>
<div class="sel" style="left:1268.8999999999999px;top:921px;height:38px;line-height:37px">请选择<svg width="13" height="12" viewBox="0 0 13 12" fill="none" stroke="#8c8c8c" stroke-width="1.9"><path d="M1.4 3L6.3 7.9L11.2 3"/></svg></div>
<div class="t" style="left:2146px;top:271px;font-size:30.7px;font-weight:bold;color:#8a8a8a;font-family:'Liberation Sans','DejaVu Sans',sans-serif">\ (•◡•) /</div>
<div class="t" style="left:2146px;top:312px;font-size:23.75px;color:#8a8a8a">超级表单开发 <span style="font-size:15px;margin-left:-2.2px">V7.0正式版</span></div>
<div class="t" style="left:2202px;top:1110.5px;font-size:26.4px;color:#ababab">激活 Windows</div>
<div class="t" style="left:2202px;top:1141.8px;font-size:18.7px;color:#ababab">转到“设置”以激活 Windows。</div>
<div class="wm" style="left:51px;top:65px">Id:12025-10-15gadmin</div>
<div class="wm" style="left:496px;top:65px">Id:12025-10-15gadmin</div>
<div class="wm" style="left:941px;top:65px">Id:12025-10-15gadmin</div>
<div class="wm" style="left:1386px;top:65px">Id:12025-10-15gadmin</div>
<div class="wm" style="left:1831px;top:65px">Id:12025-10-15gadmin</div>
<div class="wm" style="left:2276px;top:65px">Id:12025-10-15gadmin</div>
<div class="wm" style="left:51px;top:228px">Id:12025-10-15gadmin</div>
<div class="wm" style="left:496px;top:228px">Id:12025-10-15gadmin</div>
<div class="wm" style="left:941px;top:228px">Id:12025-10-15gadmin</div>
<div class="wm" style="left:1386px;top:228px">Id:12025-10-15gadmin</div>
<div class="wm" style="left:1831px;top:228px">Id:12025-10-15gadmin</div>
<div class="wm" style="left:2276px;top:228px">Id:12025-10-15gadmin</div>
<div class="wm" style="left:51px;top:391px">Id:12025-10-15gadmin</div>
<div class="wm" style="left:496px;top:391px">Id:12025-10-15gadmin</div>
<div class="wm" style="left:941px;top:391px">Id:12025-10-15gadmin</div>
<div class="wm" style="left:1386px;top:391px">Id:12025-10-15gadmin</div>
<div class="wm" style="left:1831px;top:391px">Id:12025-10-15gadmin</div>
<div class="wm" style="left:2276px;top:391px">Id:12025-10-15gadmin</div>
<div class="wm" style="left:51px;top:554px">Id:12025-10-15gadmin</div>
<div class="wm" style="left:496px;top:554px">Id:12025-10-15gadmin</div>
<div class="wm" style="left:941px;top:554px">Id:12025-10-15gadmin</div>
<div class="wm" style="left:1386px;top:554px">Id:12025-10-15gadmin</div>
<div class="wm" style="left:1831px;top:554px">Id:12025-10-15gadmin</div>
<div class="wm" style="left:2276px;top:554px">Id:12025-10-15gadmin</div>
<div class="wm" style="left:51px;top:717px">Id:12025-10-15gadmin</div>
<div class="wm" style="left:496px;top:717px">Id:12025-10-15gadmin</div>
<div class="wm" style="left:941px;top:717px">Id:12025-10-15gadmin</div>
<div class="wm" style="left:1386px;top:717px">Id:12025-10-15gadmin</div>
<div class="wm" style="left:1831px;top:717px">Id:12025-10-15gadmin</div>
<div class="wm" style="left:2276px;top:717px">Id:12025-10-15gadmin</div>
</body></html>
